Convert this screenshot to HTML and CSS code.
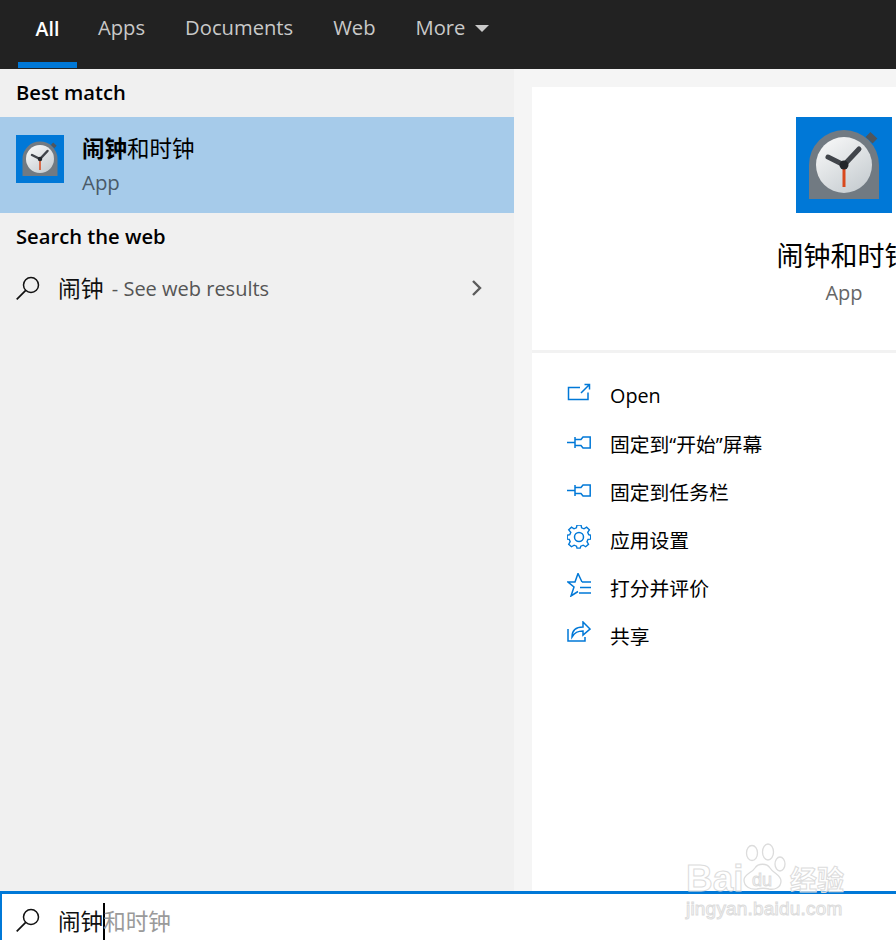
FILE: index.html
```html
<!DOCTYPE html>
<html lang="zh-CN">
<head>
<meta charset="utf-8">
<title>Search</title>
<link rel="stylesheet" href="styles.css">
</head>
<body>
<svg class="defs" width="0" height="0" aria-hidden="true">
  <defs>
    <symbol id="clock" viewBox="0 0 96 96">
      <rect width="96" height="96" fill="#0078d7"/>
      <path d="M72 17.500 79 24" stroke="#50565c" stroke-width="7"/>
      <path d="M13 82V48a35 35 0 0 1 70 0v34z" fill="#717a82"/>
      <circle cx="48" cy="48" r="28" fill="url(#face)"/>
      <path d="M48 48 32 40M48 48 63 32" stroke="#40444a" stroke-width="5" stroke-linecap="round" fill="none"/>
      <path d="M48 52v18" stroke="#d9481c" stroke-width="3"/>
      <circle cx="48" cy="48" r="4.500" fill="#23262a"/>
    </symbol>
    <linearGradient id="face" x1="0" y1="0" x2="0.700" y2="1">
      <stop offset="0" stop-color="#fbfbfb"/>
      <stop offset="1" stop-color="#c8ced2"/>
    </linearGradient>
    <symbol id="search" viewBox="0 0 24 24">
      <circle cx="15" cy="9" r="7.500" fill="none" stroke="currentColor" stroke-width="1.500"/>
      <path d="M9.700 14.300 0.700 23.300" stroke="currentColor" stroke-width="1.700" fill="none"/>
    </symbol>
    <symbol id="pin" viewBox="0 0 24 24">
      <path d="M0 13.500h8M8 8v11M8 10.500h6l2-2.500h7.200v11H16l-2-2.500H8" fill="none" stroke="currentColor" stroke-width="1.500"/>
    </symbol>
  </defs>
</svg>

<div class="screen">
  <nav class="tabs">
    <a class="tab tab-active">All</a>
    <a class="tab">Apps</a>
    <a class="tab">Documents</a>
    <a class="tab">Web</a>
    <a class="tab">More<span class="caret"></span></a>
  </nav>

  <main class="main">
    <section class="results">
      <h2 class="group-title group-first">Best match</h2>
      <div class="app-row">
        <svg class="app-icon"><use href="#clock"/></svg>
        <div class="app-text">
          <div class="app-name"><b>闹钟</b>和时钟</div>
          <div class="app-kind">App</div>
        </div>
      </div>
      <h2 class="group-title group-web">Search the web</h2>
      <div class="web-row">
        <svg class="web-search"><use href="#search"/></svg>
        <span class="web-term">闹钟</span>
        <span class="web-hint"> - See web results</span>
        <svg class="chevron" viewBox="0 0 12 18"><path d="M2 2l7 7-7 7" fill="none" stroke="currentColor" stroke-width="2.400"/></svg>
      </div>
    </section>

    <section class="detail">
      <div class="card">
        <div class="hero">
          <svg class="hero-icon"><use href="#clock"/></svg>
          <div class="hero-name">闹钟和时钟</div>
          <div class="hero-kind">App</div>
        </div>
        <ul class="actions">
          <li class="action">
            <svg class="action-icon" viewBox="0 0 24 24"><path d="M13 6.500H1.500v12H21v-7M14 12l8.500-8.500M17.500 3.500h5v5" fill="none" stroke="currentColor" stroke-width="1.500"/></svg>
            <span>Open</span>
          </li>
          <li class="action">
            <svg class="action-icon"><use href="#pin"/></svg>
            <span>固定到“开始”屏幕</span>
          </li>
          <li class="action">
            <svg class="action-icon"><use href="#pin"/></svg>
            <span>固定到任务栏</span>
          </li>
          <li class="action">
            <svg class="action-icon" viewBox="0 0 24 24"><path d="M10 1h4l.6 3 2.400 1 2.600-1.700 2.800 2.800L20.700 8.700l1 2.400 2 .6v4l-2.700.3-1 2.400 1.500 2.700-2.800 2.600-2.500-1.600-2.400 1-.6 2H10l-.5-2-2.400-1-2.600 1.600-2.800-2.600 1.500-2.700-1-2.400-2-.3v-4l2.600-.6 1-2.400L1.700 6.100 4.500 3.300 7 5l2.400-1z" transform="translate(0 -1) scale(1 .96)" fill="none" stroke="currentColor" stroke-width="1.400"/><circle cx="12" cy="12" r="4.500" fill="none" stroke="currentColor" stroke-width="1.500"/></svg>
            <span>应用设置</span>
          </li>
          <li class="action">
            <svg class="action-icon" viewBox="0 0 24 24"><path d="M15 9 11 .5 8 9H1l6 5-3 9 7-4.500" fill="none" stroke="currentColor" stroke-width="1.500"/><path d="M15 9h9M13 14.500h11M12 20h12" stroke="currentColor" stroke-width="1.500"/></svg>
            <span>打分并评价</span>
          </li>
          <li class="action">
            <svg class="action-icon" viewBox="0 0 24 24"><path d="M1 8v12h17v-4" fill="none" stroke="currentColor" stroke-width="1.500"/><path d="M5 16c0-7 4-10 11-10V1l7 7-7 6v-4c-5 0-8 1-11 6z" fill="none" stroke="currentColor" stroke-width="1.500"/></svg>
            <span>共享</span>
          </li>
        </ul>
      </div>
    </section>
  </main>

  <footer class="searchbar">
    <svg class="bar-search"><use href="#search"/></svg>
    <span class="typed">闹钟</span><span class="cursor"></span><span class="suggest">和时钟</span>
  </footer>

  <div class="watermark" aria-hidden="true">
    <svg class="paw" viewBox="0 0 52 52">
      <g fill="rgba(255,255,255,.55)" stroke="#dcdcdc" stroke-width="1.300">
        <ellipse cx="14" cy="11" rx="5.500" ry="7.500"/>
        <ellipse cx="30" cy="10" rx="5.500" ry="8"/>
        <ellipse cx="42" cy="22" rx="5" ry="7"/>
        <path d="M6 38c0-6 8-7 11-12 3-5 12-5 15 0 3 5 11 7 11 13 0 7-7 9-12 8-4-1-8-1-12 0-6 1-13-2-13-9z"/>
      </g>
    </svg>
    <span class="wm-bai">Bai</span><span class="wm-du">du</span><span class="wm-jy">经验</span>
    <div class="wm-url">jingyan.baidu.com</div>
  </div>
</div>
</body>
</html>
```

FILE: styles.css
```css
* { box-sizing: border-box; }
html, body { margin: 0; padding: 0; height: 100%; overflow: hidden; }
body {
  font-family: "Open Sans", "Noto Sans", "Noto Sans CJK SC", sans-serif;
  color: #000;
  background: #f5f5f5;
}
.defs { position: absolute; }
.screen {
  position: relative;
  width: 896px;
  height: 940px;
  display: flex;
  flex-direction: column;
  overflow: hidden;
}

/* top tabs */
.tabs {
  height: 69px;
  flex: none;
  background: #222;
  display: flex;
  padding: 0 0 1px 18px;
}
.tab {
  height: 68px;
  padding: 11px 20px 0;
  font-size: 20.200px;
  line-height: 32px;
  color: #c9c9c9;
  white-space: nowrap;
}
.tab-active {
  width: 59px;
  margin-right: 1px;
  padding: 13px 0 0;
  text-align: center;
  font-size: 19.500px;
  color: #fff;
  font-weight: 600;
  border-bottom: 6px solid #0078d7;
}
.caret {
  display: inline-block;
  margin-left: 10px;
  vertical-align: 3px;
  border-left: 7px solid transparent;
  border-right: 7px solid transparent;
  border-top: 7px solid #c9c9c9;
}

.main { flex: 1; display: flex; min-height: 0; }

/* left column */
.results { width: 514px; flex: none; background: #f0f0f0; }
.group-title {
  margin: 0;
  padding-left: 16px;
  font-size: 20.200px;
  font-weight: 600;
  line-height: 28px;
  color: #000;
}
.group-first { height: 48px; padding-top: 9px; }
.group-web { height: 48px; padding-top: 9px; }
.app-row {
  height: 96px;
  background: #a6cbea;
  display: flex;
  align-items: flex-start;
  padding: 18px 16px 0;
}
.app-icon { width: 48px; height: 48px; flex: none; }
.app-text { margin-left: 18px; margin-top: -2px; }
.app-name {
  font-family: "Noto Sans CJK SC", sans-serif;
  font-size: 22.500px;
  line-height: 28px;
}
.app-kind { margin-top: 7px; font-size: 20.400px; line-height: 28px; color: #4a5a68; }
.web-row {
  height: 50px;
  display: flex;
  align-items: center;
  padding: 4px 31px 0 16px;
}
.web-search { width: 24px; height: 24px; color: #111; flex: none; }
.web-term {
  margin-left: 18px;
  font-family: "Noto Sans CJK SC", sans-serif;
  font-size: 22.800px;
  line-height: 30px;
  color: #111;
}
.web-hint { margin-left: 3px; font-size: 20px; color: #555; white-space: pre; flex: 1; }
.chevron { width: 12px; height: 18px; color: #5c5c5c; flex: none; }

/* right column */
.detail { flex: 1; padding: 18px 0 0 18px; min-width: 0; }
.card { width: 624px; height: 804px; background: #fff; }
.hero {
  height: 266px;
  padding-top: 30px;
  display: flex;
  flex-direction: column;
  align-items: center;
  border-bottom: 3px solid #f2f2f2;
}
.hero-icon { width: 96px; height: 96px; flex: none; }
.hero-name {
  margin-top: 24px;
  font-family: "Noto Sans CJK SC", sans-serif;
  font-size: 27px;
  line-height: 36px;
}
.hero-kind { margin-top: 6px; font-size: 20px; line-height: 28px; color: #666; }
.actions { list-style: none; margin: 0; padding: 18px 0 0 35px; }
.action {
  height: 48px;
  display: flex;
  align-items: center;
  font-family: "Open Sans", "Noto Sans CJK SC", sans-serif;
  font-size: 19.800px;
  color: #000;
}
.action-icon { width: 24px; height: 24px; color: #0078d7; flex: none; margin: -4px 19px 0 0; }

/* bottom search */
.searchbar {
  height: 49px;
  flex: none;
  background: #fff;
  border-top: 3px solid #0078d7;
  border-left: 2px solid #0078d7;
  display: flex;
  align-items: center;
  padding: 6px 0 0 14px;
  font-family: "Noto Sans CJK SC", sans-serif;
  font-size: 22.600px;
}
.bar-search { width: 24px; height: 24px; color: #111; flex: none; margin-right: 18px; }
.typed { color: #111; }
.cursor { width: 2px; height: 37px; background: #000; margin: 0 -2px 0 0; flex: none; align-self: flex-end; }
.suggest { color: #9a9a9a; }

/* watermark */
.watermark {
  position: absolute;
  left: 686px;
  top: 842px;
  width: 170px;
  height: 78px;
  font-family: "Liberation Sans", sans-serif;
  color: rgba(255,255,255,.5);
  -webkit-text-stroke: 1px #dcdcdc;
}
.paw { position: absolute; left: 52px; top: 0; width: 52px; height: 52px; }
.wm-bai { position: absolute; left: 0; top: 17px; font-size: 37px; line-height: 40px; font-weight: 700; }
.wm-du { position: absolute; left: 66px; top: 28px; font-size: 18px; line-height: 20px; }
.wm-jy { position: absolute; left: 104px; top: 21px; font-family: "Noto Sans CJK SC", sans-serif; font-size: 27px; line-height: 32px; font-weight: 700; }
.wm-url { position: absolute; left: 0; top: 56px; font-size: 19px; line-height: 22px; letter-spacing: .2px; white-space: nowrap; }
```
